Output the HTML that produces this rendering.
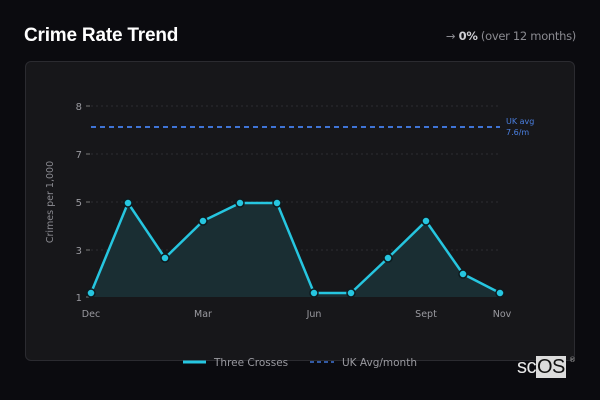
<!DOCTYPE html>
<html><head><meta charset="utf-8"><style>
*{margin:0;padding:0;box-sizing:border-box}
body{width:600px;height:400px;background:#0b0b0f;font-family:"DejaVu Sans","Liberation Sans",sans-serif;position:relative;overflow:hidden;color:#fff}
.title{position:absolute;left:24px;top:25px;font-family:"Liberation Sans",sans-serif;font-size:19px;font-weight:bold;color:#fff;letter-spacing:-0.2px}
.trend{position:absolute;right:24px;top:29px;font-size:11.5px;color:#8a8a90;letter-spacing:-0.3px}
.trend b{color:#cfcfd4}
.card{position:absolute;left:25px;top:61px;width:550px;height:300px;background:#17171a;border:1px solid #2b2b30;border-radius:6px}
svg{position:absolute;left:0;top:0}
.logo{position:absolute;left:517px;top:357px;font-family:"Liberation Sans",sans-serif;font-size:20px;color:#e8e8e8;line-height:21px;letter-spacing:-0.5px}
.logo span{background:#dcdcdc;color:#111;padding:0 1px}
.reg{position:absolute;left:569px;top:356px;font-size:7px;color:#aaa}
</style></head><body>
<div class="title">Crime Rate Trend</div>
<div class="trend">→ <b>0%</b> (over 12 months)</div>
<div class="card"></div>
<svg width="600" height="400" font-family="DejaVu Sans, Liberation Sans, sans-serif">
<g stroke="#2e2e33" stroke-dasharray="2,3" stroke-width="1">
<line x1="91" y1="106" x2="500" y2="106"/><line x1="91" y1="154" x2="500" y2="154"/>
<line x1="91" y1="202" x2="500" y2="202"/><line x1="91" y1="250" x2="500" y2="250"/>
</g>
<g stroke="#777" stroke-width="1"><line x1="86" y1="106" x2="90" y2="106"/><line x1="86" y1="154" x2="90" y2="154"/><line x1="86" y1="202" x2="90" y2="202"/><line x1="86" y1="250" x2="90" y2="250"/><line x1="86" y1="297" x2="90" y2="297"/></g>
<g fill="#9a9aa0" font-size="10" text-anchor="end">
<text x="82" y="110">8</text><text x="82" y="158">7</text><text x="82" y="206">5</text><text x="82" y="254">3</text><text x="82" y="301">1</text>
</g>
<text transform="translate(53,202) rotate(-90)" fill="#8a8a90" font-size="9.5" text-anchor="middle">Crimes per 1,000</text>
<g fill="#9a9aa0" font-size="9.5" text-anchor="middle">
<text x="91" y="317">Dec</text><text x="203" y="317">Mar</text><text x="314" y="317">Jun</text><text x="426" y="317">Sept</text><text x="502" y="317">Nov</text>
</g>
<line x1="91" y1="127" x2="500" y2="127" stroke="#3f74d6" stroke-width="2" stroke-dasharray="5,4"/>
<text x="506" y="124" fill="#4a7fe0" font-size="8">UK avg</text>
<text x="506" y="135" fill="#4a7fe0" font-size="8">7.6/m</text>
<path d="M91,293 L128,203 L165,258 L203,221 L240,203 L277,203 L314,293 L351,293 L388,258 L426,221 L463,274 L500,293 L500,297 L91,297 Z" fill="#1a2e33"/>
<polyline points="91,293 128,203 165,258 203,221 240,203 277,203 314,293 351,293 388,258 426,221 463,274 500,293" fill="none" stroke="#26c6e0" stroke-width="2.5" stroke-linejoin="round"/>
<g fill="#26c6e0" stroke="#0e1a1e" stroke-width="1.5">
<circle cx="91" cy="293" r="4"/><circle cx="128" cy="203" r="4"/><circle cx="165" cy="258" r="4"/><circle cx="203" cy="221" r="4"/><circle cx="240" cy="203" r="4"/><circle cx="277" cy="203" r="4"/><circle cx="314" cy="293" r="4"/><circle cx="351" cy="293" r="4"/><circle cx="388" cy="258" r="4"/><circle cx="426" cy="221" r="4"/><circle cx="463" cy="274" r="4"/><circle cx="500" cy="293" r="4"/>
</g>
<line x1="183" y1="362" x2="206" y2="362" stroke="#26c6e0" stroke-width="3"/>
<text x="214" y="366" fill="#9a9aa0" font-size="10.5">Three Crosses</text>
<line x1="310" y1="362" x2="334" y2="362" stroke="#3f74d6" stroke-width="1.5" stroke-dasharray="4,3"/>
<text x="342" y="366" fill="#9a9aa0" font-size="10.5">UK Avg/month</text>
</svg>
<div class="logo">sc<span>OS</span></div>
<div class="reg">®</div>
</body></html>
